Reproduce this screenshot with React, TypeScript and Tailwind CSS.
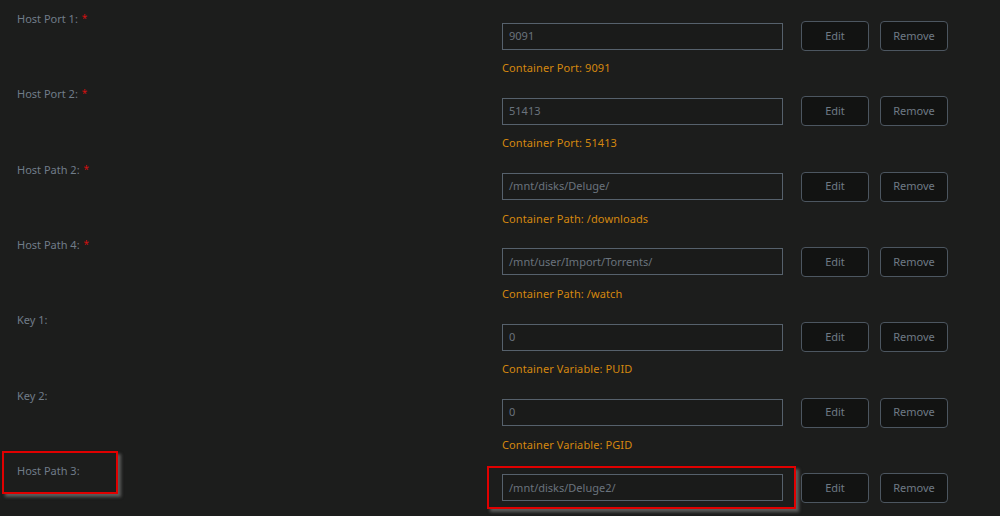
const rows = [
  { label: "Host Port 1:", req: true, value: "9091", hint: "Container Port: 9091" },
  { label: "Host Port 2:", req: true, value: "51413", hint: "Container Port: 51413" },
  { label: "Host Path 2:", req: true, value: "/mnt/disks/Deluge/", hint: "Container Path: /downloads" },
  { label: "Host Path 4:", req: true, value: "/mnt/user/Import/Torrents/", hint: "Container Path: /watch" },
  { label: "Key 1:", req: false, value: "0", hint: "Container Variable: PUID" },
  { label: "Key 2:", req: false, value: "0", hint: "Container Variable: PGID" },
  { label: "Host Path 3:", req: false, value: "/mnt/disks/Deluge2/", hint: "Container Path: /downloads2", mark: true },
];

const Btn = ({ text, className = "" }: { text: string; className?: string }) => (
  <button className={`w-[68px] h-[30px] rounded-[4px] border border-[#4c5660] bg-[#121312] text-[11px] text-[#6f7a85] ${className}`}>
    {text}
  </button>
);

export default function App() {
  return (
    <div className="w-[1000px] h-[516px] overflow-hidden bg-[#1c1d1c] text-[11px] [font-family:'Noto_Sans',sans-serif]">
      {rows.map((r, i) => (
        <div key={i} className="relative flex h-[75.33px]">
          <div className="w-[502px] shrink-0 pl-[17px] pt-[11px] leading-[15px] text-[#707c89]">
            {r.label}
            {r.req && <span className="ml-[4px] text-[10px] align-top text-[#d01010]">*</span>}
          </div>
          <div className="pt-[21px]">
            <div className="flex items-center h-[30px]">
              <div className="w-[281px] h-[27px] border border-[#56616c] bg-[#1a1b1a] pl-[6px] flex items-center text-[11px] text-[#6a737d]">
                {r.value}
              </div>
              <Btn text="Edit" className="ml-[18px]" />
              <Btn text="Remove" className="ml-[11px]" />
            </div>
            <div className="mt-[9px] leading-[15px] tracking-[0.1px] text-[#d4870f]">{r.hint}</div>
          </div>
          {r.mark && (
            <>
              <div className="absolute left-[2px] top-[-1px] w-[116px] h-[43px] border-2 border-[#e00000] shadow-[3px_3px_3px_rgba(120,120,120,0.7)]" />
              <div className="absolute left-[487px] top-[14px] w-[309px] h-[43px] border-2 border-[#e00000] shadow-[3px_3px_3px_rgba(120,120,120,0.7)]" />
            </>
          )}
        </div>
      ))}
    </div>
  );
}
